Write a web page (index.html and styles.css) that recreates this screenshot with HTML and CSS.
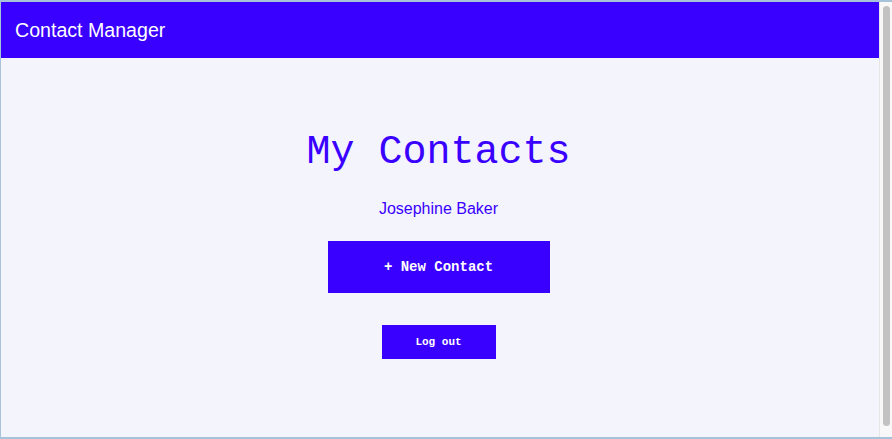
FILE: index.html
```html
<!DOCTYPE html>
<html>
<head>
<meta charset="utf-8">
<title>Contact Manager</title>
<link rel="stylesheet" href="styles.css">
</head>
<body>
<div class="frame">
  <div class="viewport">
    <header class="topbar">Contact Manager</header>
    <main class="content">
      <h1 class="title">My Contacts</h1>
      <p class="user">Josephine Baker</p>
      <button class="btn btn-new">+ New Contact</button>
      <button class="btn btn-logout">Log out</button>
    </main>
  </div>
  <div class="scrollbar"><div class="thumb"></div></div>
</div>
</body>
</html>
```
FILE: styles.css
```css
* { box-sizing: border-box; }
html, body { margin: 0; padding: 0; }
body { width: 892px; height: 439px; overflow: hidden; background: #f4f4fd; }
.frame {
  display: flex;
  width: 892px;
  height: 439px;
  border-top: 2px solid #a7c3da;
  border-left: 1px solid #a7c3da;
  border-bottom: 2px solid #a7c3da;
}
.viewport {
  flex: 1;
  display: flex;
  flex-direction: column;
  background: #f4f4fd;
}
.topbar {
  height: 56px;
  background: #3a00ff;
  color: #ffffff;
  font-family: "Liberation Sans", Arial, sans-serif;
  font-size: 19.6px;
  line-height: 56px;
  padding-left: 14px;
}
.content {
  display: flex;
  flex-direction: column;
  align-items: center;
  padding-top: 72px;
  padding-right: 3px;
}
.title {
  margin: 0;
  font-family: "Liberation Mono", "Courier New", monospace;
  font-weight: normal;
  font-size: 40px;
  line-height: 46px;
  color: #3a00ff;
}
.user {
  margin: 23px 0 0;
  font-family: "Liberation Sans", Arial, sans-serif;
  font-size: 16px;
  line-height: 20px;
  color: #3a00ff;
}
.btn {
  border: none;
  background: #3a00ff;
  color: #ffffff;
  font-family: "Liberation Mono", "Courier New", monospace;
  font-weight: bold;
  padding: 0;
}
.btn-new {
  margin-top: 22px;
  width: 222px;
  height: 52px;
  font-size: 14px;
}
.btn-logout {
  margin-top: 32px;
  width: 114px;
  height: 34px;
  font-size: 11px;
}
.scrollbar {
  width: 13px;
  background: #f8f8f8;
  border-left: 1px solid #e6e6e6;
  padding: 4px 2px 0 3px;
}
.thumb {
  width: 7px;
  height: 420px;
  background: #c2c2c2;
  border-radius: 4px;
}
```
